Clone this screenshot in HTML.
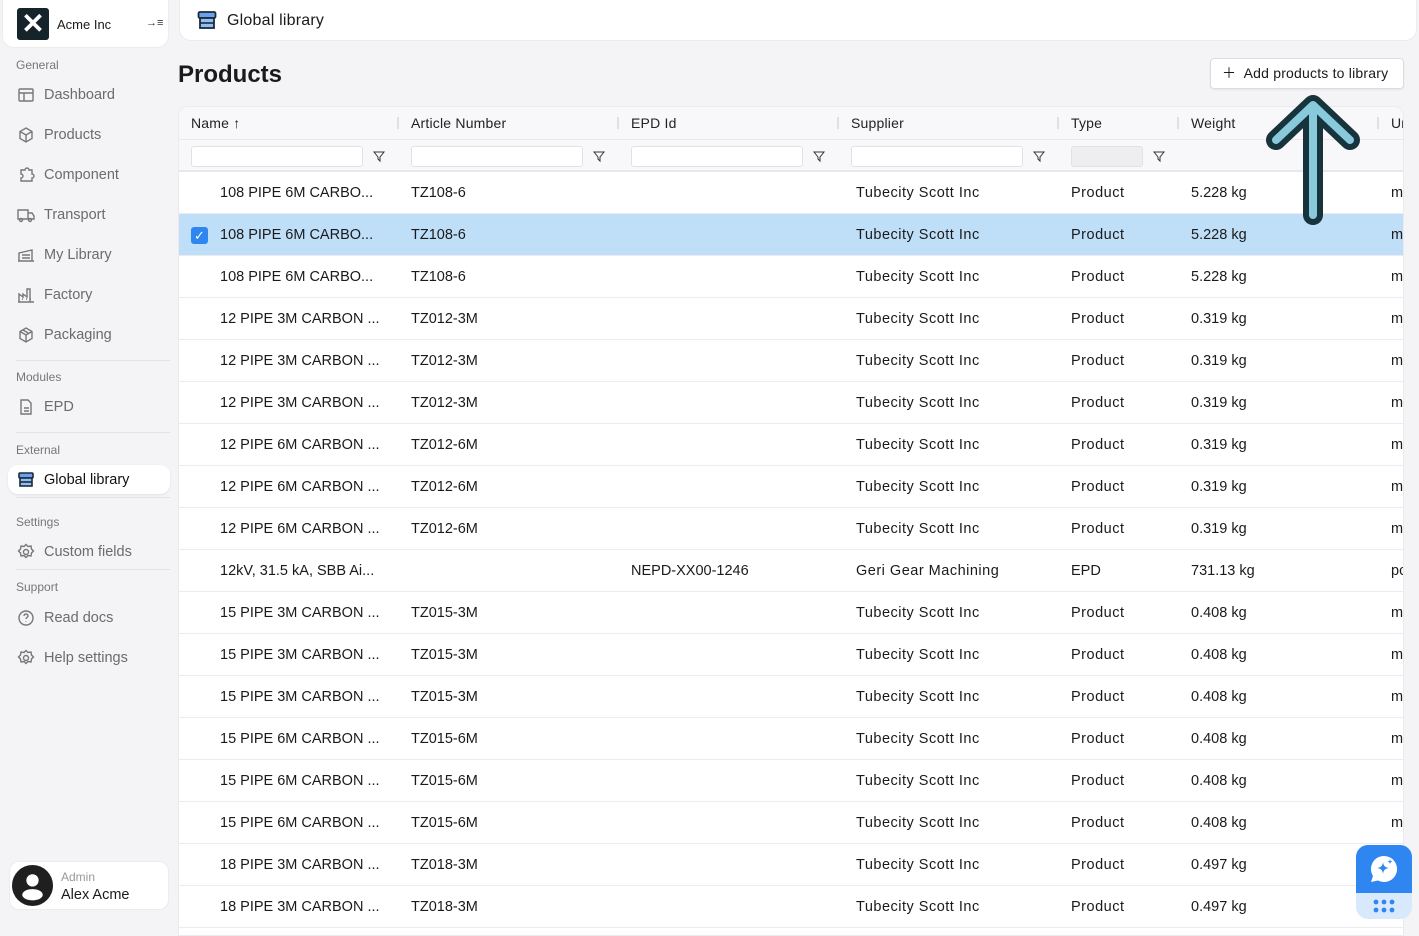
<!DOCTYPE html>
<html><head><meta charset="utf-8"><style>
*{box-sizing:border-box;margin:0;padding:0}
body{width:1419px;height:927px;overflow:hidden;background:#f4f4f6;font-family:"Liberation Sans",sans-serif;color:#1a1a1a;position:relative}
.abs{position:absolute}
.side-item{position:absolute;left:17px;font-size:14.5px;color:#6b6b70;display:flex;align-items:center;height:20px}
.side-item svg{width:18px;height:18px;margin-right:9px;stroke:#777;fill:none;stroke-width:1.4}
.lbl{position:absolute;left:16px;font-size:12px;color:#76767b}
.div{position:absolute;left:16px;width:154px;height:1px;background:#e3e3e6}
.table{position:absolute;left:178px;top:106px;width:1226px;height:830px;background:#fff;border:1px solid #ebebee;border-radius:10px 10px 0 0;overflow:hidden}
.hdr{position:absolute;left:0;top:0;width:100%;height:33px;background:#f8f8fa;border-bottom:1px solid #e8e8ec}
.flt{position:absolute;left:0;top:33px;width:100%;height:32px;background:#f8f8fa;border-bottom:2px solid #e8e8ec}
.h{position:absolute;top:8px;font-size:14px;color:#222;letter-spacing:.2px}
.sep{position:absolute;top:10px;width:2px;height:12px;background:#e0e0e4}
.inp{position:absolute;top:6px;width:172px;height:21px;background:#fff;border:1px solid #e2e2e6;border-radius:3px}
.fi{position:absolute;top:9px;width:14px;height:14px}
.row{position:absolute;left:0;width:100%;height:42px;border-bottom:1px solid #ececf0;font-size:14.5px}
.row span{position:absolute;top:13px;white-space:nowrap}
.row span.s{letter-spacing:.5px}
.sel{background:#bfdff9}
</style></head><body>

<div class="abs" style="left:2px;top:0;width:167px;height:48px;background:#fff;border-radius:0 0 12px 12px;border:1px solid #ececef;border-top:none"></div>
<div class="abs" style="left:17px;top:8px;width:32px;height:32px;background:#15242b;border-radius:3px;color:#fff;font-size:28px;font-weight:bold;text-align:center;line-height:32px">✕</div>
<div class="abs" style="left:57px;top:17px;font-size:13px">Acme Inc</div>
<div class="abs" style="left:146px;top:17px;font-size:11px;color:#333">→≡</div>

<div class="lbl" style="top:58px">General</div>
<div class="side-item" style="top:85px"><svg viewBox="0 0 18 18"><rect x="2" y="3" width="14" height="12" rx="1"/><path d="M2 7h14M7 7v8"/></svg>Dashboard</div>
<div class="side-item" style="top:125px"><svg viewBox="0 0 18 18"><path d="M9 2l6 3.5v7L9 16l-6-3.5v-7z M3 5.5L9 9l6-3.5M9 9v7"/></svg>Products</div>
<div class="side-item" style="top:165px"><svg viewBox="0 0 18 18"><path d="M4 4h4a2 2 0 014 0h3v4a2 2 0 010 4v3H4v-3a2 2 0 000-4z"/></svg>Component</div>
<div class="side-item" style="top:205px"><svg viewBox="0 0 18 18"><path d="M1 4h10v9H1zM11 7h4l2 3v3h-6"/><circle cx="4" cy="14" r="1.5"/><circle cx="13" cy="14" r="1.5"/></svg>Transport</div>
<div class="side-item" style="top:245px"><svg viewBox="0 0 18 18"><path d="M1 15h16M2 15V7l13-3v11M5 9h8M5 12h8"/></svg>My Library</div>
<div class="side-item" style="top:285px"><svg viewBox="0 0 18 18"><path d="M1 16h16M2 16V8l4 3V8l4 3V3h3v13M5 13h1M9 13h1M13 13h1"/></svg>Factory</div>
<div class="side-item" style="top:325px"><svg viewBox="0 0 18 18"><path d="M9 2l6 3.5v7L9 16l-6-3.5v-7z M3 5.5L9 9l6-3.5M9 9v7M6 4l6 3.5"/></svg>Packaging</div>
<div class="div" style="top:360px"></div>
<div class="lbl" style="top:370px">Modules</div>
<div class="side-item" style="top:397px"><svg viewBox="0 0 18 18"><path d="M4 2h7l3 3v11H4zM7 10h5M7 13h5"/></svg>EPD</div>
<div class="div" style="top:432px"></div>
<div class="lbl" style="top:443px">External</div>
<div class="abs" style="left:8px;top:465px;width:162px;height:29px;background:#fff;border-radius:10px;box-shadow:0 1px 2px rgba(0,0,0,.08)"></div>
<div class="side-item" style="top:470px;color:#111"><svg viewBox="0 0 18 18" style="stroke:#1a2a3a;stroke-width:1.6"><rect x="2" y="2" width="14" height="5" rx="1" fill="#6aa0ec"/><rect x="3" y="7" width="12" height="8" fill="#8fbff5"/><path d="M3 11h12"/></svg>Global library</div>
<div class="div" style="top:497px"></div>
<div class="lbl" style="top:515px">Settings</div>
<div class="side-item" style="top:542px"><svg viewBox="0 0 18 18"><circle cx="9" cy="9" r="2.5"/><path d="M9 1.5l2 2 3-.5.5 3 2 2-2 2-.5 3-3-.5-2 2-2-2-3 .5-.5-3-2-2 2-2 .5-3 3 .5z"/></svg>Custom fields</div>
<div class="div" style="top:569px"></div>
<div class="lbl" style="top:580px">Support</div>
<div class="side-item" style="top:608px"><svg viewBox="0 0 18 18"><circle cx="9" cy="9" r="7"/><path d="M7 7a2 2 0 114 0c0 1.5-2 1.5-2 3M9 12.5v.5"/></svg>Read docs</div>
<div class="side-item" style="top:648px"><svg viewBox="0 0 18 18"><circle cx="9" cy="9" r="2.5"/><path d="M9 1.5l2 2 3-.5.5 3 2 2-2 2-.5 3-3-.5-2 2-2-2-3 .5-.5-3-2-2 2-2 .5-3 3 .5z"/></svg>Help settings</div>

<div class="abs" style="left:9px;top:861px;width:160px;height:49px;background:#fff;border:1px solid #ececef;border-radius:10px"></div>
<svg class="abs" style="left:12px;top:865px" width="41" height="41" viewBox="0 0 40 40"><circle cx="20" cy="20" r="20" fill="#1f1f1f"/><circle cx="20" cy="15" r="6" fill="#fff"/><ellipse cx="20" cy="29" rx="10" ry="5.5" fill="#fff"/></svg>
<div class="abs" style="left:61px;top:870px;font-size:12px;color:#999">Admin</div>
<div class="abs" style="left:61px;top:887px;font-size:14.5px">Alex Acme</div>

<div class="abs" style="left:179px;top:0;width:1238px;height:41px;background:#fff;border:1px solid #ececef;border-top:none;border-radius:0 0 12px 12px"></div>
<svg class="abs" style="left:197px;top:11px" width="20" height="19" viewBox="0 0 20 19"><rect x="1.5" y="1" width="17" height="6" rx="1.5" fill="#6aa0ec" stroke="#1a2a3a" stroke-width="1.8"/><rect x="3" y="7" width="14" height="10" fill="#8fbff5" stroke="#1a2a3a" stroke-width="1.8"/><path d="M3 12h14" stroke="#1a2a3a" stroke-width="1.6"/></svg>
<div class="abs" style="left:227px;top:12px;font-size:16px;letter-spacing:.2px">Global library</div>

<div class="abs" style="left:178px;top:61px;font-size:24px;font-weight:bold">Products</div>
<div class="abs" style="left:1210px;top:58px;width:194px;height:31px;background:#fff;border:1px solid #dcdce0;border-radius:4px;box-shadow:0 1px 2px rgba(0,0,0,.06);font-size:14px;line-height:29px;padding-left:11px;letter-spacing:.2px">＋&nbsp; Add products to library</div>

<div class="table">
<div class="hdr">
<span class="h" style="left:12px">Name ↑</span><div class="sep" style="left:218px"></div>
<span class="h" style="left:232px">Article Number</span><div class="sep" style="left:438px"></div>
<span class="h" style="left:452px">EPD Id</span><div class="sep" style="left:658px"></div>
<span class="h" style="left:672px">Supplier</span><div class="sep" style="left:878px"></div>
<span class="h" style="left:892px">Type</span><div class="sep" style="left:998px"></div>
<span class="h" style="left:1012px">Weight</span><div class="sep" style="left:1198px"></div>
<span class="h" style="left:1212px">Unit</span>
</div>
<div class="flt">
<div class="inp" style="left:12px"></div><svg class="fi" style="left:193px" viewBox="0 0 14 14"><path d="M2 3h10L8 8v4L6 10V8z" fill="none" stroke="#333"/></svg>
<div class="inp" style="left:232px"></div><svg class="fi" style="left:413px" viewBox="0 0 14 14"><path d="M2 3h10L8 8v4L6 10V8z" fill="none" stroke="#333"/></svg>
<div class="inp" style="left:452px"></div><svg class="fi" style="left:633px" viewBox="0 0 14 14"><path d="M2 3h10L8 8v4L6 10V8z" fill="none" stroke="#333"/></svg>
<div class="inp" style="left:672px"></div><svg class="fi" style="left:853px" viewBox="0 0 14 14"><path d="M2 3h10L8 8v4L6 10V8z" fill="none" stroke="#333"/></svg>
<div class="inp" style="left:892px;width:72px;background:#eeeef0"></div><svg class="fi" style="left:973px" viewBox="0 0 14 14"><path d="M2 3h10L8 8v4L6 10V8z" fill="none" stroke="#333"/></svg>
</div>

<div class="row" style="top:65px"><span style="left:41px">108 PIPE 6M CARBO...</span><span style="left:232px">TZ108-6</span><span class="s" style="left:677px">Tubecity Scott Inc</span><span class="s" style="left:892px">Product</span><span style="left:1012px">5.228 kg</span><span style="left:1212px">m</span></div>
<div class="row sel" style="top:107px"><div class="abs" style="left:12px;top:13px;width:17px;height:17px;background:#2f86f0;border-radius:3px;color:#fff;font-size:13px;text-align:center;line-height:17px">✓</div><span style="left:41px">108 PIPE 6M CARBO...</span><span style="left:232px">TZ108-6</span><span class="s" style="left:677px">Tubecity Scott Inc</span><span class="s" style="left:892px">Product</span><span style="left:1012px">5.228 kg</span><span style="left:1212px">m</span></div>
<div class="row" style="top:149px"><span style="left:41px">108 PIPE 6M CARBO...</span><span style="left:232px">TZ108-6</span><span class="s" style="left:677px">Tubecity Scott Inc</span><span class="s" style="left:892px">Product</span><span style="left:1012px">5.228 kg</span><span style="left:1212px">m</span></div>
<div class="row" style="top:191px"><span style="left:41px">12 PIPE 3M CARBON ...</span><span style="left:232px">TZ012-3M</span><span class="s" style="left:677px">Tubecity Scott Inc</span><span class="s" style="left:892px">Product</span><span style="left:1012px">0.319 kg</span><span style="left:1212px">m</span></div>
<div class="row" style="top:233px"><span style="left:41px">12 PIPE 3M CARBON ...</span><span style="left:232px">TZ012-3M</span><span class="s" style="left:677px">Tubecity Scott Inc</span><span class="s" style="left:892px">Product</span><span style="left:1012px">0.319 kg</span><span style="left:1212px">m</span></div>
<div class="row" style="top:275px"><span style="left:41px">12 PIPE 3M CARBON ...</span><span style="left:232px">TZ012-3M</span><span class="s" style="left:677px">Tubecity Scott Inc</span><span class="s" style="left:892px">Product</span><span style="left:1012px">0.319 kg</span><span style="left:1212px">m</span></div>
<div class="row" style="top:317px"><span style="left:41px">12 PIPE 6M CARBON ...</span><span style="left:232px">TZ012-6M</span><span class="s" style="left:677px">Tubecity Scott Inc</span><span class="s" style="left:892px">Product</span><span style="left:1012px">0.319 kg</span><span style="left:1212px">m</span></div>
<div class="row" style="top:359px"><span style="left:41px">12 PIPE 6M CARBON ...</span><span style="left:232px">TZ012-6M</span><span class="s" style="left:677px">Tubecity Scott Inc</span><span class="s" style="left:892px">Product</span><span style="left:1012px">0.319 kg</span><span style="left:1212px">m</span></div>
<div class="row" style="top:401px"><span style="left:41px">12 PIPE 6M CARBON ...</span><span style="left:232px">TZ012-6M</span><span class="s" style="left:677px">Tubecity Scott Inc</span><span class="s" style="left:892px">Product</span><span style="left:1012px">0.319 kg</span><span style="left:1212px">m</span></div>
<div class="row" style="top:443px"><span style="left:41px">12kV, 31.5 kA, SBB Ai...</span><span style="left:452px">NEPD-XX00-1246</span><span class="s" style="left:677px">Geri Gear Machining</span><span style="left:892px">EPD</span><span style="left:1012px">731.13 kg</span><span style="left:1212px">pc</span></div>
<div class="row" style="top:485px"><span style="left:41px">15 PIPE 3M CARBON ...</span><span style="left:232px">TZ015-3M</span><span class="s" style="left:677px">Tubecity Scott Inc</span><span class="s" style="left:892px">Product</span><span style="left:1012px">0.408 kg</span><span style="left:1212px">m</span></div>
<div class="row" style="top:527px"><span style="left:41px">15 PIPE 3M CARBON ...</span><span style="left:232px">TZ015-3M</span><span class="s" style="left:677px">Tubecity Scott Inc</span><span class="s" style="left:892px">Product</span><span style="left:1012px">0.408 kg</span><span style="left:1212px">m</span></div>
<div class="row" style="top:569px"><span style="left:41px">15 PIPE 3M CARBON ...</span><span style="left:232px">TZ015-3M</span><span class="s" style="left:677px">Tubecity Scott Inc</span><span class="s" style="left:892px">Product</span><span style="left:1012px">0.408 kg</span><span style="left:1212px">m</span></div>
<div class="row" style="top:611px"><span style="left:41px">15 PIPE 6M CARBON ...</span><span style="left:232px">TZ015-6M</span><span class="s" style="left:677px">Tubecity Scott Inc</span><span class="s" style="left:892px">Product</span><span style="left:1012px">0.408 kg</span><span style="left:1212px">m</span></div>
<div class="row" style="top:653px"><span style="left:41px">15 PIPE 6M CARBON ...</span><span style="left:232px">TZ015-6M</span><span class="s" style="left:677px">Tubecity Scott Inc</span><span class="s" style="left:892px">Product</span><span style="left:1012px">0.408 kg</span><span style="left:1212px">m</span></div>
<div class="row" style="top:695px"><span style="left:41px">15 PIPE 6M CARBON ...</span><span style="left:232px">TZ015-6M</span><span class="s" style="left:677px">Tubecity Scott Inc</span><span class="s" style="left:892px">Product</span><span style="left:1012px">0.408 kg</span><span style="left:1212px">m</span></div>
<div class="row" style="top:737px"><span style="left:41px">18 PIPE 3M CARBON ...</span><span style="left:232px">TZ018-3M</span><span class="s" style="left:677px">Tubecity Scott Inc</span><span class="s" style="left:892px">Product</span><span style="left:1012px">0.497 kg</span><span style="left:1212px">m</span></div>
<div class="row" style="top:779px"><span style="left:41px">18 PIPE 3M CARBON ...</span><span style="left:232px">TZ018-3M</span><span class="s" style="left:677px">Tubecity Scott Inc</span><span class="s" style="left:892px">Product</span><span style="left:1012px">0.497 kg</span><span style="left:1212px">m</span></div>
</div>

<svg class="abs" style="left:1266px;top:95px" width="94" height="130" viewBox="0 0 94 130">
<path d="M47 120V12M10 45L47 10L84 45" fill="none" stroke="#17343d" stroke-width="20" stroke-linecap="round" stroke-linejoin="round"/>
<path d="M47 120V12M10 45L47 10L84 45" fill="none" stroke="#88cadb" stroke-width="8" stroke-linecap="round" stroke-linejoin="round"/>
</svg>

<div class="abs" style="left:1356px;top:845px;width:56px;height:74px;border-radius:12px;overflow:hidden;background:#d9e9fd">
<div style="height:48px;background:#2f86f0;position:relative">
<svg class="abs" style="left:13px;top:9px" width="30" height="30" viewBox="0 0 30 30"><path d="M15 2a13 13 0 11-6 24.5L2 28l2-6A13 13 0 0115 2z" fill="#fff"/><path d="M14 8c.5 4 2 5.5 6 6-4 .5-5.5 2-6 6-.5-4-2-5.5-6-6 4-.5 5.5-2 6-6z" fill="#2f86f0"/><path d="M21 5l.6 2 2 .6-2 .6-.6 2-.6-2-2-.6 2-.6z" fill="#2f86f0"/></svg>
</div>
<svg class="abs" style="left:16px;top:53px" width="24" height="16" viewBox="0 0 24 16"><g fill="#2f86f0"><circle cx="4" cy="4" r="2.4"/><circle cx="12" cy="4" r="2.4"/><circle cx="20" cy="4" r="2.4"/><circle cx="4" cy="12" r="2.4"/><circle cx="12" cy="12" r="2.4"/><circle cx="20" cy="12" r="2.4"/></g></svg>
</div>
</body></html>
